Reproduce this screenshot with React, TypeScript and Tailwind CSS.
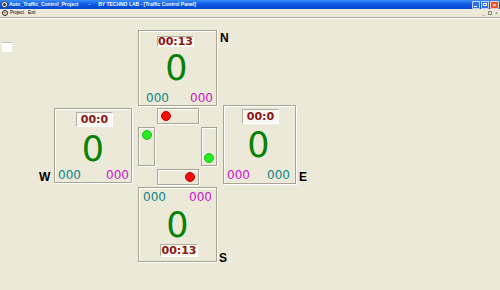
import React from 'react'

// frame look shared by the four direction panels and the signal bars
const frame = 'border border-[#a8a493] shadow-[inset_1px_1px_0_#ffffff,1px_1px_0_#ffffff]'

function Timer({ text, className }: { text: string; className: string }) {
  return (
    <div
      className={`flex items-center justify-center bg-[#f7f6f0] border-t border-l border-[#b3af9f] border-b border-r border-b-white border-r-white ${className}`}
    >
      <span className="font-['DejaVu_Sans',sans-serif] font-bold text-[11px] leading-none text-[#8a1616]">{text}</span>
    </div>
  )
}

function Counters({ left, right, className }: { left: string; right: string; className: string }) {
  return (
    <div className={`flex justify-between font-['DejaVu_Sans',sans-serif] text-[12px] leading-none ${className}`}>
      <span className={left}>000</span>
      <span className={right}>000</span>
    </div>
  )
}

function Zero({ className }: { className: string }) {
  return (
    <div className={`self-center font-['DejaVu_Sans',sans-serif] text-[35px] leading-none text-[#078107] ${className}`}>0</div>
  )
}

function Dot({ color }: { color: 'red' | 'green' }) {
  return (
    <div
      className={
        color === 'red'
          ? 'w-[10px] h-[10px] rounded-full bg-[#f30d0d] border border-[#c80000]'
          : 'w-[10px] h-[10px] rounded-full bg-[#22ee22] border border-[#1cbf1c]'
      }
    />
  )
}

function Label({ text, className }: { text: string; className: string }) {
  return (
    <div className={`font-['Liberation_Sans',Arial,sans-serif] font-bold text-[12px] leading-none text-black ${className}`}>{text}</div>
  )
}

export default function App() {
  const teal = 'text-[#0b8585]'
  const pink = 'text-[#c815c8]'

  return (
    <div className="w-[500px] h-[290px] overflow-hidden bg-[#ece9d8] font-['Liberation_Sans',Arial,sans-serif]">
      {/* title bar */}
      <div className="h-[9px] flex items-center bg-gradient-to-b from-[#3a8cf8] via-[#0a58e4] to-[#0448cc]">
        <div className="ml-[1px] w-[7px] h-[7px] rounded-full bg-white border border-[#333] flex items-center justify-center">
          <div className="w-[3px] h-[3px] rounded-full bg-[#333]" />
        </div>
        <span className="ml-[1px] text-[5px] font-bold text-white leading-none whitespace-nowrap">Auto_Traffic_Control_Project</span>
        <span className="ml-[10px] text-[5px] font-bold text-white leading-none">-</span>
        <span className="ml-[8px] text-[5px] font-bold text-white leading-none whitespace-nowrap">BY TECHNO LAB - [Traffic Control Panel]</span>
        <div className="ml-auto mr-[1px] flex gap-[1px]">
          <div className="w-[8px] h-[8px] rounded-[1px] bg-[#2f6ff0] border border-white/70 flex items-end justify-start p-[1px]">
            <div className="w-[3px] h-[1px] bg-white" />
          </div>
          <div className="w-[8px] h-[8px] rounded-[1px] bg-[#2f6ff0] border border-white/70 flex items-center justify-center">
            <div className="w-[4px] h-[3px] border border-white" />
          </div>
          <div className="w-[9px] h-[8px] rounded-[1px] bg-[#e2532b] border border-white/70 flex items-center justify-center text-white text-[6px] font-bold leading-none">
            ×
          </div>
        </div>
      </div>

      {/* menu bar */}
      <div className="h-[9px] flex items-center border-b border-[#aca899] shadow-[0_1px_0_#ffffff]">
        <div className="ml-[2px] w-[6px] h-[6px] rounded-full border border-[#222] flex items-center justify-center text-[4px] leading-none text-[#222]">
          ×
        </div>
        <span className="ml-[2px] text-[4.5px] leading-none text-black">Project</span>
        <span className="ml-[4px] text-[4.5px] leading-none text-black">Exit</span>
        <div className="ml-auto mr-[2px] flex items-center gap-[3px] text-[5px] leading-none text-[#777]">
          <span>_</span>
          <div className="w-[4px] h-[4px] border border-[#888]" />
          <span>×</span>
        </div>
      </div>

      {/* row 1: north */}
      <div className="mt-[12px] flex items-start">
        <div className="ml-[2px] mt-[12px] w-[10px] h-[10px] bg-white border-t border-[#c9c6b8]" />
        <div className={`ml-[126px] w-[79px] h-[76px] flex flex-col ${frame}`}>
          <Timer text="00:13" className="mt-[5px] ml-[18px] w-[37px] h-[11px]" />
          <Zero className="mt-[4px] mr-[2px]" />
          <Counters left={teal} right={pink} className="mt-[6px] pl-[7px] pr-[3px]" />
        </div>
        <Label text="N" className="ml-[3px] mt-[2px]" />
      </div>

      {/* row 2: west, junction, east */}
      <div className="mt-[-1px] h-[80px] flex items-start">
        <Label text="W" className="ml-[39px] w-[15px] self-end mb-[2px]" />
        <div className={`mt-[3px] w-[78px] h-[75px] flex flex-col ${frame}`}>
          <Timer text="00:0" className="mt-[3px] ml-[21px] w-[37px] h-[15px]" />
          <Zero className="mt-[5px]" />
          <Counters left={teal} right={pink} className="mt-[2px] pl-[3px] pr-[2px]" />
        </div>

        <div className="ml-[6px] mt-[3px] w-[79px] flex flex-col">
          <div className={`ml-[19px] w-[42px] h-[16px] flex items-center pl-[3px] ${frame}`}>
            <Dot color="red" />
          </div>
          <div className="mt-[3px] h-[39px] flex justify-between">
            <div className={`w-[17px] h-[39px] flex justify-center items-start pt-[2px] ${frame}`}>
              <Dot color="green" />
            </div>
            <div className={`w-[16px] h-[39px] flex justify-center items-end pb-[2px] ${frame}`}>
              <Dot color="green" />
            </div>
          </div>
          <div className={`mt-[3px] ml-[19px] w-[42px] h-[16px] flex items-center justify-end pr-[3px] ${frame}`}>
            <Dot color="red" />
          </div>
        </div>

        <div className={`ml-[6px] w-[73px] h-[79px] flex flex-col ${frame}`}>
          <Timer text="00:0" className="mt-[3px] ml-[18px] w-[37px] h-[15px]" />
          <Zero className="mt-[4px] mr-[2px]" />
          <Counters left={pink} right={teal} className="mt-[6px] pl-[3px] pr-[5px]" />
        </div>
        <Label text="E" className="ml-[3px] self-end mb-[2px]" />
      </div>

      {/* row 3: south */}
      <div className="mt-[2px] flex items-end">
        <div className={`ml-[138px] w-[79px] h-[75px] flex flex-col ${frame}`}>
          <Counters left={teal} right={pink} className="mt-[3px] pl-[4px] pr-[4px]" />
          <Zero className="mt-[5px]" />
          <Timer text="00:13" className="mt-[1px] ml-[21px] w-[38px] h-[13px]" />
        </div>
        <Label text="S" className="ml-[2px] mb-[-2px]" />
      </div>
    </div>
  )
}
